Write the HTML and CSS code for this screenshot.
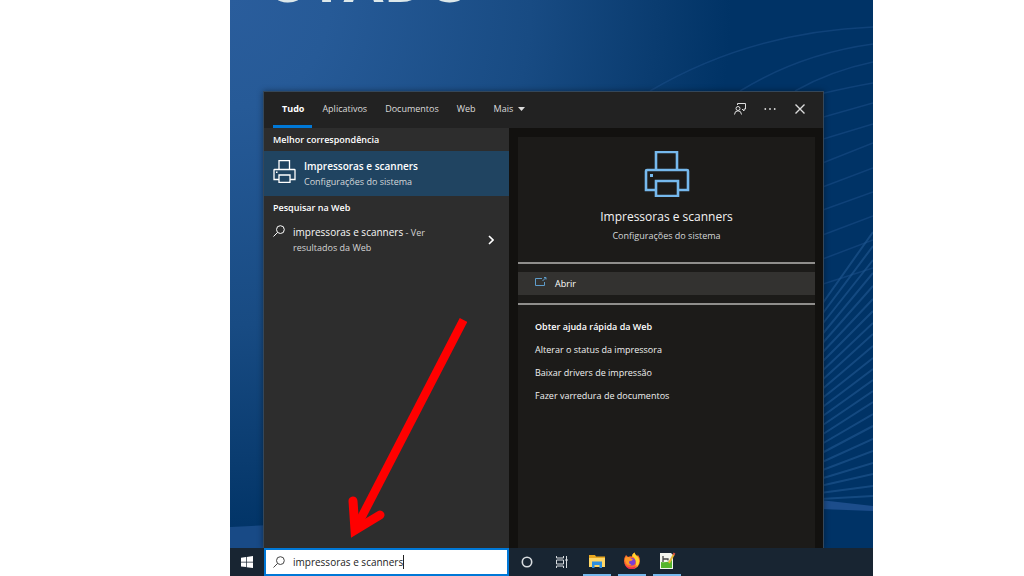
FILE: index.html
```html
<!DOCTYPE html>
<html lang="pt-BR">
<head>
<meta charset="utf-8">
<meta name="viewport" content="width=device-width, initial-scale=1">
<title>Impressoras e scanners</title>
<link rel="stylesheet" href="styles.css">
</head>
<body>
<svg class="sprite" aria-hidden="true">
  <symbol id="printer" viewBox="0 0 46 46">
    <path d="M12 18V1h21v17M12 39H2V20q0-1 1-1h40q1 0 1 1v19H34M12 30h22v15H12z" fill="none" stroke="currentColor" stroke-width="2.6"/>
    <rect x="6" y="23" width="3" height="3" fill="currentColor"/>
  </symbol>
  <symbol id="lens" viewBox="0 0 12 12">
    <circle cx="7.4" cy="4.6" r="3.9" fill="none" stroke="currentColor"/>
    <path d="M4.6 7.4.5 11.5" stroke="currentColor"/>
  </symbol>
</svg>
<main class="screen">
  <div class="stage">
    <svg class="wallpaper" viewBox="0 0 643 548" preserveAspectRatio="none" aria-hidden="true">
      <g fill="none" stroke="#1c4e88" stroke-width="1.5" opacity=".55">
        <path d="M420 91Q520 32 643 27M510 91Q570 54 643 44M565 91Q600 71 643 62M590 94Q620 87 643 83M590 118L643 103M590 140L643 124M590 164L643 143M590 188L643 168M590 211L643 192M590 236L643 216M590 260L643 240M590 285L643 268"/>
      </g>
      <g fill="none" stroke="#1f568f" stroke-width="2" opacity=".65">
        <path d="M590 307L643 232M590 317L643 246M590 327L643 260M590 337L643 273M590 346L643 286M590 355L643 299M590 364L643 311M590 373L643 323M590 382L643 334M590 391L643 346M590 400L643 358M590 409L643 369M590 418L643 380M590 427L643 391M590 436L643 402M590 445L643 414M590 454L643 426M590 463L643 439M590 471L643 451M590 479L643 463M590 486L643 474M590 493L643 486M590 499L643 496"/>
      </g>
      <path d="M590 500L643 506V511L590 509z" fill="#1c4d8b"/>
      <path d="M0 527L40 525V548H0z" fill="#184a86"/>
    </svg>
    <div class="headline" aria-hidden="true">UTADO</div>

    <section class="panel" aria-label="Pesquisa">
      <header class="tabs">
        <nav class="tab-list">
          <button class="tab active">Tudo</button>
          <button class="tab">Aplicativos</button>
          <button class="tab">Documentos</button>
          <button class="tab">Web</button>
          <button class="tab">Mais <svg class="caret" viewBox="0 0 7 4" aria-hidden="true"><path d="M0 0h7L3.500 4z" fill="currentColor"/></svg></button>
        </nav>
        <div class="tools">
          <button class="tool" aria-label="Comentários"><svg viewBox="0 0 12 12" fill="none" stroke="currentColor"><circle cx="4" cy="5.500" r="2"/><path d="M.5 11.500Q.7 7.800 4 7.800T7.500 11.500M3.500 2V.5h8v5.500h-1.500v2l-2-2"/></svg></button>
          <button class="tool" aria-label="Opções"><svg viewBox="0 0 12 12" fill="currentColor"><circle cx="1.300" cy="6" r=".9"/><circle cx="6" cy="6" r=".9"/><circle cx="10.700" cy="6" r=".9"/></svg></button>
          <button class="tool" aria-label="Fechar"><svg viewBox="0 0 12 12" fill="none" stroke="currentColor" stroke-width="1.400"><path d="M1.500 1.500l9 9M10.500 1.500l-9 9"/></svg></button>
        </div>
      </header>

      <div class="columns">
        <div class="results">
          <h2 class="group">Melhor correspondência</h2>
          <button class="best">
            <svg class="best-icon" aria-hidden="true"><use href="#printer"/></svg>
            <span class="lines"><strong class="name">Impressoras e scanners</strong><span class="sub">Configurações do sistema</span></span>
          </button>
          <h2 class="group web-group">Pesquisar na Web</h2>
          <button class="web-result">
            <svg class="lens" aria-hidden="true"><use href="#lens"/></svg>
            <span class="web-text"><span class="query">impressoras e scanners</span> - Ver<br>resultados da Web</span>
            <svg class="chevron" viewBox="0 0 6 10" fill="none" stroke="currentColor" stroke-width="1.600" aria-hidden="true"><path d="M1 1l4 4-4 4"/></svg>
          </button>
        </div>

        <div class="preview">
          <div class="card">
            <div class="hero">
              <svg class="hero-icon" aria-hidden="true"><use href="#printer"/></svg>
              <h1 class="title">Impressoras e scanners</h1>
              <p class="sub">Configurações do sistema</p>
            </div>
            <div class="actions">
              <button class="open">
                <svg class="open-icon" viewBox="0 0 12 10" fill="none" stroke="currentColor" aria-hidden="true"><path d="M7 1.500H.5v7h9V5M7.500 4l3-3M9 .5h2v2"/></svg>
                Abrir
              </button>
            </div>
            <div class="help">
              <h2 class="help-title">Obter ajuda rápida da Web</h2>
              <a class="help-link" href="#">Alterar o status da impressora</a>
              <a class="help-link" href="#">Baixar drivers de impressão</a>
              <a class="help-link" href="#">Fazer varredura de documentos</a>
            </div>
          </div>
        </div>
      </div>
    </section>

    <footer class="taskbar">
      <button class="start" aria-label="Iniciar"><svg viewBox="0 0 12 12" fill="currentColor"><path d="M0 1.700L5 1v4.700H0zM5.700.9L12 0v5.700H5.700zM0 6.400h5v4.700L0 10.400zM5.700 6.400H12V12l-6.300-.8z"/></svg></button>
      <label class="search">
        <svg class="lens" aria-hidden="true"><use href="#lens"/></svg>
        <input class="search-input" type="text" value="impressoras e scanners" aria-label="Pesquisar">
      </label>
      <button class="task" aria-label="Cortana"><svg class="ring" viewBox="0 0 12 12" fill="none" stroke="currentColor" stroke-width="1.600"><circle cx="6" cy="6" r="4.700"/></svg></button>
      <button class="task" aria-label="Visão de tarefas"><svg class="ring" viewBox="0 0 12 12" fill="none" stroke="currentColor"><path d="M.5 0v2h7V0M.5 12v-2h7v2M.5 4h7v4h-7zM10.500 0v12"/><path d="M9.500 4h2" stroke-width="2"/></svg></button>
      <button class="task running" aria-label="Explorador de Arquivos"><svg class="app" viewBox="0 0 18 18"><path d="M1 3h6l1 1.500h9V15H1z" fill="#e9a820"/><path d="M1 6h16v9H1z" fill="#ffd766"/><path d="M4 16V9.500h10V16h-2.500v-3h-5v3z" fill="#2d8fe0"/></svg></button>
      <button class="task running" aria-label="Firefox"><svg class="app" viewBox="0 0 18 18"><path d="M3 3l2 2q2-1 4-.5Q9 2 11.500.5q.5 2 2.500 3.500 1-.5 .8-1.500 2.200 3 2.200 6.500a8 8 0 0 1-16 0q0-3.500 2-6z" fill="#ff6a2b"/><path d="M11.500.5q.5 2 2.500 3.500 3 3 2 7-1 4-5 5.500 3-4 1.500-8T9 4.500Q9 2 11.500.5z" fill="#ffd22e"/><circle cx="8.700" cy="9.800" r="3.800" fill="#7b3fd4"/><path d="M2 6q3-2 6 .5l2 1q-1 1.500-3.500 1.500-1.500 3 2 3.500-4 1.500-5.500-1.500T2 6z" fill="#ff9a2a"/><path d="M1.500 11q2 4.500 7 4.500 4 0 6-3-1.500 4.500-6.500 4.500-5 0-6.500-6z" fill="#ee2a55"/></svg></button>
      <button class="task running" aria-label="Editor"><svg class="app" viewBox="0 0 18 18"><path d="M2 1h11l2 2v14H2z" fill="#f2f5ee"/><path d="M3 10q6 1 11-2v8H3z" fill="#55b52c"/><path d="M5 4v6M5 7h5v1.500" fill="none" stroke="#444" stroke-width="1.300"/><path d="M16 2L11 11" stroke="#e3b433" stroke-width="2"/><path d="M16.500 1l-1 2" stroke="#d74b3f" stroke-width="2"/></svg></button>
    </footer>

    <svg class="arrow" viewBox="0 0 120 222" aria-hidden="true">
      <path d="M116.500 2L11 206" fill="none" stroke="#f00" stroke-width="8.500"/>
      <path d="M6 183L8 212L33 197" fill="none" stroke="#f00" stroke-width="9" stroke-linecap="round"/>
    </svg>
  </div>
</main>
</body>
</html>
```
FILE: styles.css
```css
* { box-sizing: border-box; }
body {
  margin: 0;
  background: #fff;
  color: #fff;
  font-family: "Open Sans", "Noto Sans", sans-serif;
  font-size: 9px;
  line-height: 12px;
}
h1, h2, p { margin: 0; font-size: inherit; }
button {
  margin: 0;
  padding: 0;
  border: 0;
  background: none;
  color: inherit;
  font: inherit;
  text-align: left;
}
a { color: inherit; text-decoration: none; }
.sprite { position: absolute; width: 0; height: 0; }

.screen {
  display: grid;
  grid-template-columns: 230fr 643fr 151fr;
  min-height: 100vh;
}
.stage {
  grid-column: 2;
  position: relative;
  display: flex;
  flex-direction: column;
  overflow: hidden;
  background: radial-gradient(ellipse 78% 94% at 0 0, #2a5d9c 0, #265a97 20%, #184b83 60%, #0a3c70 85%, #003366 100%);
}
.wallpaper { position: absolute; inset: 0 0 28px; width: 100%; height: calc(100% - 28px); }
.headline {
  position: absolute;
  top: -52px;
  left: 36px;
  font: bold 58px/64px "Open Sans", sans-serif;
  color: #dde8ea;
}

.panel {
  position: relative;
  flex: 1;
  display: flex;
  flex-direction: column;
  margin: 91px 49px 0 33px;
  border: solid #34475a;
  border-width: 1px 1px 0;
  background: #2d2d2d;
  box-shadow: 0 0 6px #0006;
}
.tabs {
  display: flex;
  justify-content: space-between;
  height: 36px;
  background: #222;
  color: #dcdcdc;
}
.tab-list { display: flex; gap: 18px; padding-left: 9px; }
.tab { padding-bottom: 2px; white-space: nowrap; }
.active {
  padding: 1px 8px 0 9px;
  border-bottom: 3px solid #0078d7;
  margin-right: -8px;
  color: #fff;
  font-weight: 700;
}
.caret { width: 7px; height: 4px; margin-left: 2px; vertical-align: 1px; }
.tools { display: flex; gap: 18px; padding: 0 17px 2px 0; }
.tool { display: flex; align-items: center; }
.tool svg { width: 12px; height: 12px; }

.columns { flex: 1; display: grid; grid-template-columns: 245fr 314fr; }
.group { padding: 6px 9px 5px; font-weight: 600; }
.best {
  display: flex;
  align-items: center;
  gap: 8px;
  width: 100%;
  height: 45px;
  padding: 0 9px;
  background: #204461;
}
.best-icon { width: 23px; height: 23px; margin-bottom: 4px; }
.lines { display: grid; gap: 3px; }
.name { font-size: 10px; line-height: 14px; font-weight: 600; }
.sub { color: #d4d8da; font-weight: normal; }
.web-group { padding-bottom: 11px; }
.web-result { display: flex; width: 100%; padding: 0 15px 0 9px; gap: 8px; }
.lens { width: 12px; height: 12px; flex: none; }
.web-text { flex: 1; line-height: 15px; color: #d4d4d4; }
.query { font-size: 10px; color: #f8f8f8; }
.chevron { width: 6px; height: 10px; align-self: center; }

.preview { display: flex; padding: 9px 8px 0 9px; background: #12110f; }
.card { flex: 1; background: #1c1b19; }
.hero { display: grid; justify-items: center; padding: 14px 0 20px; }
.hero-icon { width: 46px; height: 46px; color: #76b9ed; }
.title { margin: 12px 0 5px; font-size: 12px; line-height: 16px; font-weight: normal; color: #f4f4f4; }
.actions { padding: 8px 0; border: solid #8f8e8c; border-width: 2px 0; }
.open {
  display: flex;
  align-items: center;
  gap: 8px;
  width: 100%;
  height: 23px;
  padding-left: 17px;
  background: #333230;
}
.open-icon { width: 12px; height: 10px; margin-bottom: 3px; color: #5e9dcb; }
.help { display: grid; gap: 11px; justify-items: start; padding: 16px 17px; color: #f0f0f0; }
.help-title { font-weight: 600; color: #fff; }

.taskbar { position: relative; display: flex; height: 28px; background: #182532; }
.start { width: 34px; padding: 2px 0 0 11px; }
.start svg { width: 12px; height: 12px; }
.search {
  display: flex;
  align-items: center;
  gap: 8px;
  width: 245px;
  padding-left: 7px;
  border: 2px solid #0078d7;
  background: #fff;
  color: #444;
}
.search-input {
  width: 111px;
  padding: 0;
  border: 0;
  border-right: 1px solid #222;
  border-radius: 0;
  outline: 0;
  background: none;
  color: #222;
  font: 10px/14px "Open Sans", "Noto Sans", sans-serif;
}
.task { display: grid; place-items: center; width: 35px; }
.running { width: 28px; margin-right: 7px; border-bottom: 2px solid #76b9ed; }
.running:nth-of-type(4) { margin-left: 4px; }
.ring { width: 12px; height: 12px; color: #d8dde0; }
.app { width: 18px; height: 18px; }
.arrow { position: absolute; left: 117px; bottom: 36px; width: 120px; height: 222px; }
```
